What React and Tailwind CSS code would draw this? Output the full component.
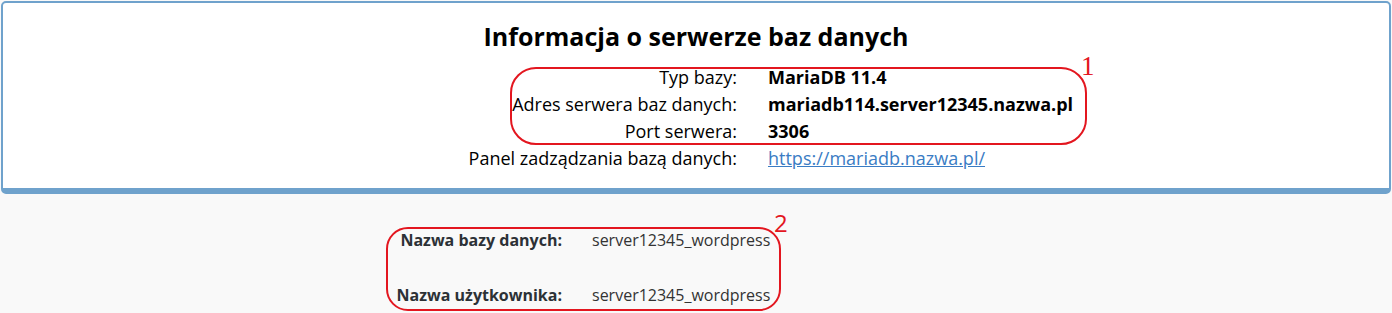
export default function App() {
  const rows = [
    ["Typ bazy:", "MariaDB 11.4", "bold"],
    ["Adres serwera baz danych:", "mariadb114.server12345.nazwa.pl", "bold"],
    ["Port serwera:", "3306", "bold"],
    ["Panel zadządzania bazą danych:", "https://mariadb.nazwa.pl/", "link"],
  ];
  return (
    <div className="relative w-[1392px] h-[313px] bg-[#f9f9f9] overflow-hidden" style={{ fontFamily: '"Open Sans", sans-serif' }}>
      <div className="mx-[1px] mt-[1px] h-[193px] bg-white border-2 border-b-[6px] border-[#6fa2cc] rounded-[5px] pt-[14px]">
        <h1 className="text-center text-[25px] font-bold text-black leading-[38px]">Informacja o serwerze baz danych</h1>
        <div className="mt-[9px] flex flex-col">
          {rows.map(([l, v, t]) => (
            <div key={l} className="flex h-[27px] items-center text-[18px] text-black">
              <div className="w-[734px] text-right">{l}</div>
              <div className="ml-[31px]">
                {t === "link" ? (
                  <span className="text-[#3a7cc4] underline">{v}</span>
                ) : (
                  <span className="font-bold">{v}</span>
                )}
              </div>
            </div>
          ))}
        </div>
      </div>
      <div className="mt-[32px] flex flex-col gap-[28px] text-[16px]">
        <div className="flex h-[27px] items-center">
          <div className="w-[562px] text-right font-bold text-[#2c3136]">Nazwa bazy danych:</div>
          <div className="ml-[30px] text-[#333]">server12345_wordpress</div>
        </div>
        <div className="flex h-[27px] items-center">
          <div className="w-[562px] text-right font-bold text-[#2c3136]">Nazwa użytkownika:</div>
          <div className="ml-[30px] text-[#333]">server12345_wordpress</div>
        </div>
      </div>
      <div className="absolute left-[510px] top-[67px] w-[577px] h-[78px] border-2 border-[#e3161f] rounded-[26px]" />
      <div className="absolute left-[1081px] top-[53px] text-[27px] leading-[27px] text-[#e3161f]" style={{ fontFamily: '"Liberation Serif", serif' }}>1</div>
      <div className="absolute left-[386px] top-[227px] w-[395px] h-[84px] border-2 border-[#e3161f] rounded-[22px]" />
      <div className="absolute left-[774px] top-[211px] text-[24px] leading-[24px] text-[#e3161f]" style={{ fontFamily: '"Open Sans", sans-serif' }}>2</div>
    </div>
  );
}
